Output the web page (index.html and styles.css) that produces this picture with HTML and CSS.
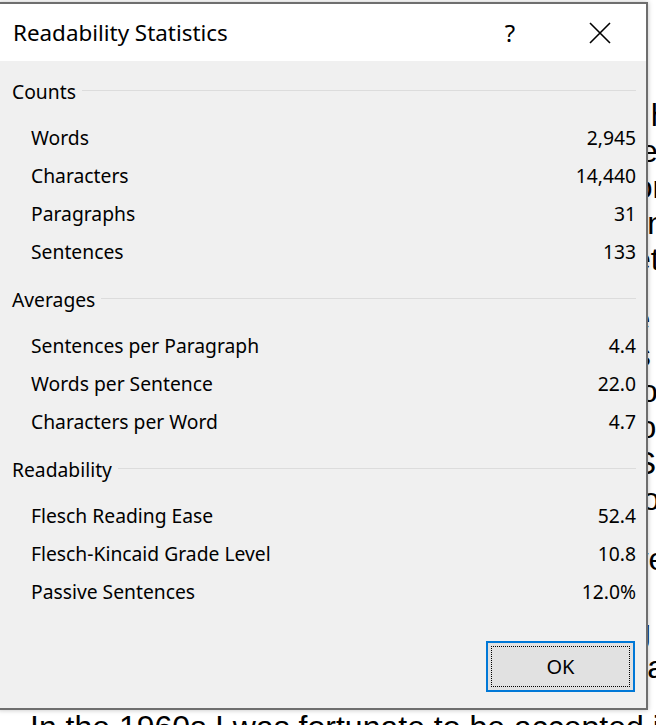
FILE: index.html
```html
<!DOCTYPE html>
<html lang="en">
<head>
    <meta charset="UTF-8">
    <meta name="viewport" content="width=device-width, initial-scale=1.0">
    <title>Readability Statistics</title>
    <link rel="stylesheet" href="styles.css">
</head>
<body>

<div class="page">
    <p>My father worked on the railway for most of his<br>
    life, and every summer he brought home the best<br>
    stories of the towns along the line, the stations where<br>
    trains stopped and the people who waited on the plats<br>
    with bags and boxes of goods for the market in town.</p>
    <p>We lived in a small house at the edge of the village,<br>
    close enough to the tracks that the windows shook<br>
    whenever the night freight went past. My mother kept<br>
    a garden behind the house and grew most of what we<br>
    ate, and the rest came from the market on Saturday<br>
    mornings, the one trip that all of us looked forward to.</p>
    <p>School was a long walk away, but I liked it very much.<br>
    I read everything in the little library, and one teacher<br>
    in particular pushed me to think about going further<br>
    than anyone in our family had gone before, and I was</p>
    <p>In the 1960s I was fortunate to be accepted into the</p>
</div>

<div class="dialog">
    <div class="titlebar">
        <span class="title">Readability Statistics</span>
        <span class="title-btn help">?</span>
        <span class="title-btn close">
            <svg width="22" height="22" viewBox="0 0 22 22"><path d="M1 1 L21 21 M21 1 L1 21" stroke="#000" stroke-width="1.6" fill="none"/></svg>
        </span>
    </div>

    <div class="content">
        <div class="group">
            <div class="group-head"><span>Counts</span><span class="rule"></span></div>
            <div class="row"><span>Words</span><span>2,945</span></div>
            <div class="row"><span>Characters</span><span>14,440</span></div>
            <div class="row"><span>Paragraphs</span><span>31</span></div>
            <div class="row"><span>Sentences</span><span>133</span></div>
        </div>

        <div class="group">
            <div class="group-head"><span>Averages</span><span class="rule"></span></div>
            <div class="row"><span>Sentences per Paragraph</span><span>4.4</span></div>
            <div class="row"><span>Words per Sentence</span><span>22.0</span></div>
            <div class="row"><span>Characters per Word</span><span>4.7</span></div>
        </div>

        <div class="group">
            <div class="group-head"><span>Readability</span><span class="rule"></span></div>
            <div class="row"><span>Flesch Reading Ease</span><span>52.4</span></div>
            <div class="row"><span>Flesch-Kincaid Grade Level</span><span>10.8</span></div>
            <div class="row"><span>Passive Sentences</span><span>12.0%</span></div>
        </div>

        <div class="actions">
            <button class="ok"><span class="focus">OK</span></button>
        </div>
    </div>
</div>

</body>
</html>
```

FILE: styles.css
```css
* { margin: 0; padding: 0; box-sizing: border-box; }
html, body {
    width: 656px;
    height: 725px;
    overflow: hidden;
}
body {
    position: relative;
    background: #fff;
    font-family: "Noto Sans", sans-serif;
    color: #000;
}

/* document behind the dialog */
.page {
    width: 656px;
    height: 725px;
    overflow: hidden;
    padding: 97px 0 0 30px;
    font-family: "Liberation Sans", Arial, sans-serif;
    font-size: 32px;
    line-height: 36px;
    white-space: nowrap;
}
.page p { margin-bottom: 24px; }

/* dialog */
.dialog {
    position: absolute;
    top: 2px;
    left: -2px;
    width: 650px;
    height: 708px;
    border: 2px solid #6e6e6e;
    box-shadow: 0 0 5px rgba(0,0,0,0.25);
    display: flex;
    flex-direction: column;
    background: #f0f0f0;
}
.titlebar {
    height: 57px;
    background: #fff;
    display: flex;
    align-items: center;
    padding-left: 13px;
}
.title {
    flex: 1;
    font-size: 22.4px;
}
.title-btn {
    display: flex;
    align-items: center;
    justify-content: center;
    height: 100%;
}
.help {
    width: 30px;
    margin-right: 52px;
    font-size: 24px;
}
.close {
    width: 46px;
    margin-right: 23px;
}

.content {
    flex: 1;
    display: flex;
    flex-direction: column;
    padding: 10px 10px 0 12px;
    font-size: 19.3px;
}
.group { margin-bottom: 9px; }
.group-head {
    height: 40px;
    display: flex;
    align-items: center;
    margin-bottom: 7px;
}
.rule {
    flex: 1;
    height: 1px;
    background: #dcdcdc;
    margin: 0 0 2px 6px;
}
.row {
    height: 38px;
    display: flex;
    align-items: center;
    justify-content: space-between;
    padding-left: 19px;
}

.actions {
    margin-top: auto;
    display: flex;
    justify-content: flex-end;
    padding: 0 1px 16px 0;
}
.ok {
    width: 149px;
    height: 51px;
    border: 2px solid #0078d7;
    background: #e1e1e1;
    padding: 3px;
    font-family: "Noto Sans", sans-serif;
    font-size: 20px;
    color: #000;
}
.focus {
    display: flex;
    align-items: center;
    justify-content: center;
    width: 100%;
    height: 100%;
    border: 1px dotted #000;
}
```
